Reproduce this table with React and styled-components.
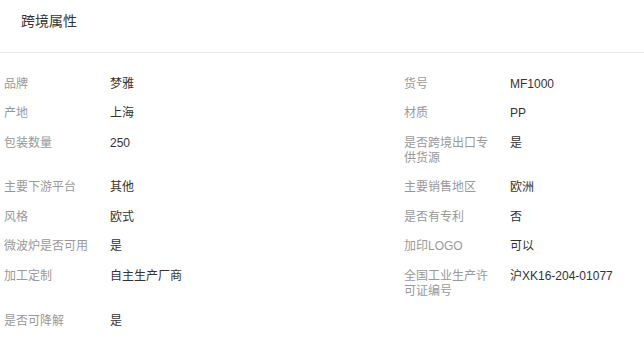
import React from 'react'
import styled, { createGlobalStyle } from 'styled-components'

const GlobalStyle = createGlobalStyle`
    body {
        margin: 0;
        background: #fff;
        font-family: "Liberation Sans", "Noto Sans CJK SC", sans-serif;
    }
`

const attrs = [
    ['品牌', '梦雅'],
    ['货号', 'MF1000'],
    ['产地', '上海'],
    ['材质', 'PP'],
    ['包装数量', '250'],
    ['是否跨境出口专供货源', '是'],
    ['主要下游平台', '其他'],
    ['主要销售地区', '欧洲'],
    ['风格', '欧式'],
    ['是否有专利', '否'],
    ['微波炉是否可用', '是'],
    ['加印LOGO', '可以'],
    ['加工定制', '自主生产厂商'],
    ['全国工业生产许可证编号', '沪XK16-204-01077'],
    ['是否可降解', '是'],
]

function App() {
    return (
        <Panel>
            <GlobalStyle />
            <Header>跨境属性</Header>
            <Grid>
                {attrs.map(([label, value]) => (
                    <Item key={label}>
                        <Label>{label}</Label>
                        <Value>{value}</Value>
                    </Item>
                ))}
            </Grid>
        </Panel>
    )
}

export default App

const Panel = styled.div`
    width: 644px;
    height: 342px;
    overflow: hidden;
    background: #fff;
`

const Header = styled.div`
    padding: 12px 21px 22px;
    font-size: 14px;
    line-height: 18px;
    color: #333;
    border-bottom: 1px solid #e8e8e8;
`

const Grid = styled.div`
    display: grid;
    grid-template-columns: 400px 1fr;
    row-gap: 14.6px;
    padding: 23.5px 0 0 4px;
`

const Item = styled.div`
    display: flex;
    align-items: flex-start;
    font-size: 12px;
    line-height: 15px;
`

const Label = styled.span`
    width: 94px;
    flex-shrink: 0;
    margin-right: 12px;
    color: #999;
`

const Value = styled.span`
    color: #333;
`
